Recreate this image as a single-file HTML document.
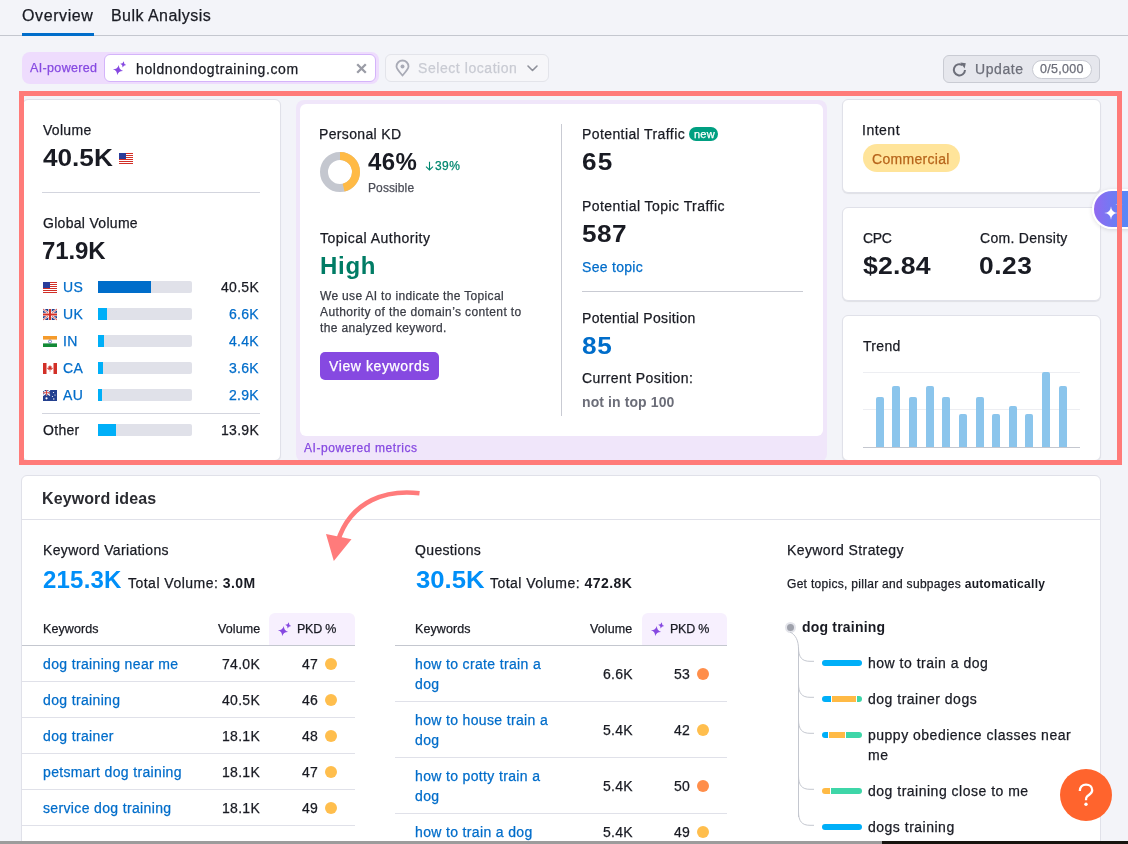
<!DOCTYPE html>
<html><head><meta charset="utf-8"><style>
html,body{margin:0;padding:0;width:1128px;height:844px;overflow:hidden;background:#F3F4F9;font-family:"Liberation Sans",sans-serif;}
.t{position:absolute;line-height:1;white-space:nowrap;will-change:transform;-webkit-text-stroke:0.25px currentColor;}
.t b{-webkit-text-stroke:0;}
.r{position:absolute;box-sizing:border-box;}
svg{position:absolute;overflow:visible;}
</style></head><body>
<div class="r" style="left:0.00px;top:35.00px;width:1128.00px;height:1.00px;background:#C4C7CF"></div>
<div class="t " style="left:22.30px;top:8.00px;font-size:16px;font-weight:400;color:#191B23;letter-spacing:0.6px;">Overview</div>
<div class="t " style="left:111.00px;top:8.00px;font-size:16px;font-weight:400;color:#191B23;letter-spacing:0.45px;">Bulk Analysis</div>
<div class="r" style="left:22.00px;top:33.00px;width:72.00px;height:3.00px;background:#006DCA"></div>
<div class="r" style="left:22.00px;top:52.00px;width:357.00px;height:32.00px;background:#EEDCFD;border-radius:8px"></div>
<div class="t " style="left:30.40px;top:62.00px;font-size:12.5px;font-weight:400;color:#8649E1;letter-spacing:0.35px;">AI-powered</div>
<div class="r" style="left:104.00px;top:54.00px;width:272.00px;height:28.00px;background:#fff;border:1px solid #D4B4FA;border-radius:6px"></div>
<svg style="left:118px;top:70px" width="1" height="1"><path fill="#8649E1" transform="rotate(10)" d="M0 -5.2 Q0.624 -0.624 5.2 0 Q0.624 0.624 0 5.2 Q-0.624 0.624 -5.2 0 Q-0.624 -0.624 0 -5.2 Z"/><path fill="#8649E1" transform="translate(5.2 -5.6) rotate(10)" d="M0 -3.1 Q0.372 -0.372 3.1 0 Q0.372 0.372 0 3.1 Q-0.372 0.372 -3.1 0 Q-0.372 -0.372 0 -3.1 Z"/></svg>
<div class="t " style="left:136.00px;top:62.00px;font-size:14px;font-weight:400;color:#191B23;letter-spacing:0.6px;">holdnondogtraining.com</div>
<svg style="left:355.5px;top:63px" width="11" height="11" viewBox="0 0 11 11"><path d="M1.2 1.2 L9.8 9.8 M9.8 1.2 L1.2 9.8" stroke="#9A9CA6" stroke-width="2.3" stroke-linecap="butt"/></svg>
<div class="r" style="left:385.00px;top:54.00px;width:164.00px;height:28.00px;background:#F6F6F9;border:1px solid #E3E4EA;border-radius:6px"></div>
<svg style="left:394.5px;top:60px" width="15" height="17" viewBox="0 0 15 17"><path d="M7.5 15.5 C4 11.5 1.5 8.8 1.5 6.5 A6 6 0 0 1 13.5 6.5 C13.5 8.8 11 11.5 7.5 15.5 Z" fill="none" stroke="#A9ABB6" stroke-width="1.8"/><circle cx="7.5" cy="6.6" r="2" fill="#A9ABB6"/></svg>
<div class="t " style="left:417.60px;top:61.00px;font-size:14px;font-weight:400;color:#C9CBD3;letter-spacing:0.56px;">Select location</div>
<svg style="left:526.5px;top:65px" width="11" height="7" viewBox="0 0 11 7"><path d="M1 1 L5.5 5.5 L10 1" fill="none" stroke="#8E909A" stroke-width="1.6" stroke-linecap="round" stroke-linejoin="round"/></svg>
<div class="r" style="left:943.00px;top:55.00px;width:157.00px;height:28.00px;background:#E6E7ED;border:1px solid #C9CBD3;border-radius:6px"></div>
<svg style="left:952px;top:61.5px" width="15" height="15" viewBox="0 0 15 15"><path d="M13 8 A5.6 5.6 0 1 1 10.6 3.2" fill="none" stroke="#6C6E79" stroke-width="2"/><path d="M8.4 0.6 L13.8 1.2 L12.6 6.4 Z" fill="#6C6E79"/></svg>
<div class="t " style="left:975.20px;top:62.00px;font-size:14px;font-weight:400;color:#6C6E79;letter-spacing:0.6px;">Update</div>
<div class="r" style="left:1032.00px;top:59.50px;width:59.50px;height:19.50px;background:#fff;border:1px solid #C9CBD3;border-radius:10px"></div>
<div class="t " style="left:1039.60px;top:63.00px;font-size:12.5px;font-weight:400;color:#6C6E79;letter-spacing:0.3px;">0/5,000</div>
<div class="r" style="left:22.00px;top:99.00px;width:259.00px;height:362.00px;background:#fff;border:1px solid #E0E1E9;border-radius:6px;box-shadow:0 1px 1px rgba(0,0,0,0.06)"></div>
<div class="t " style="left:42.60px;top:123.00px;font-size:14px;font-weight:400;color:#191B23;letter-spacing:0.3px;">Volume</div>
<div class="t " style="left:42.60px;top:146.00px;font-size:24px;font-weight:700;color:#191B23;letter-spacing:0px;-webkit-text-stroke:0;transform:scaleX(1.09);transform-origin:left top;">40.5K</div>
<svg style="left:119px;top:153px" width="14" height="11" viewBox="0 0 14 11"><rect width="14" height="11" fill="#fff"/><g fill="#D22F27"><rect y="0" width="14" height="1"/><rect y="2" width="14" height="1"/><rect y="4" width="14" height="1"/><rect y="6" width="14" height="1"/><rect y="8" width="14" height="1"/><rect y="10" width="14" height="1"/></g><rect width="7" height="6" fill="#2A3D9A"/></svg>
<div class="r" style="left:42.00px;top:192.00px;width:218.00px;height:1.00px;background:#D3D5DE"></div>
<div class="t " style="left:42.60px;top:216.00px;font-size:14px;font-weight:400;color:#191B23;letter-spacing:0.3px;">Global Volume</div>
<div class="t " style="left:41.80px;top:239.00px;font-size:24px;font-weight:700;color:#191B23;letter-spacing:-0.1px;-webkit-text-stroke:0;">71.9K</div>
<svg style="left:43px;top:282px" width="14" height="11" viewBox="0 0 14 11"><rect width="14" height="11" fill="#fff"/><g fill="#D22F27"><rect y="0" width="14" height="1"/><rect y="2" width="14" height="1"/><rect y="4" width="14" height="1"/><rect y="6" width="14" height="1"/><rect y="8" width="14" height="1"/><rect y="10" width="14" height="1"/></g><rect width="7" height="6" fill="#2A3D9A"/></svg>
<div class="t " style="left:63.20px;top:280.00px;font-size:14px;font-weight:400;color:#006DCA;letter-spacing:0.3px;">US</div>
<div class="r" style="left:98.00px;top:281.00px;width:94.00px;height:12.00px;background:#E0E1E9;border-radius:0 2px 2px 0"></div>
<div class="r" style="left:98.00px;top:281.00px;width:52.80px;height:12.00px;background:#006DCA"></div>
<div class="t " style="right:869.30px;top:280.00px;font-size:14px;font-weight:400;color:#191B23;letter-spacing:0.3px;">40.5K</div>
<svg style="left:43px;top:309px" width="14" height="11" viewBox="0 0 14 11"><rect width="14" height="11" fill="#23408F"/><path d="M0 0 L14 11 M14 0 L0 11" stroke="#fff" stroke-width="2.2"/><path d="M0 0 L14 11 M14 0 L0 11" stroke="#D22F27" stroke-width="0.8"/><rect x="5.3" width="3.4" height="11" fill="#fff"/><rect y="3.8" width="14" height="3.4" fill="#fff"/><rect x="6" width="2" height="11" fill="#D22F27"/><rect y="4.5" width="14" height="2" fill="#D22F27"/></svg>
<div class="t " style="left:63.20px;top:307.00px;font-size:14px;font-weight:400;color:#006DCA;letter-spacing:0.3px;">UK</div>
<div class="r" style="left:98.00px;top:308.00px;width:94.00px;height:12.00px;background:#E0E1E9;border-radius:0 2px 2px 0"></div>
<div class="r" style="left:98.00px;top:308.00px;width:8.90px;height:12.00px;background:#00AFF8"></div>
<div class="t " style="right:869.30px;top:307.00px;font-size:14px;font-weight:400;color:#006DCA;letter-spacing:0.3px;">6.6K</div>
<svg style="left:43px;top:336px" width="14" height="11" viewBox="0 0 14 11"><rect width="14" height="11" fill="#fff"/><rect width="14" height="3.6" fill="#F59B2B"/><rect y="7.4" width="14" height="3.6" fill="#138A36"/><circle cx="7" cy="5.5" r="1.5" fill="none" stroke="#2A3D9A" stroke-width="0.6"/></svg>
<div class="t " style="left:63.20px;top:334.00px;font-size:14px;font-weight:400;color:#006DCA;letter-spacing:0.3px;">IN</div>
<div class="r" style="left:98.00px;top:335.00px;width:94.00px;height:12.00px;background:#E0E1E9;border-radius:0 2px 2px 0"></div>
<div class="r" style="left:98.00px;top:335.00px;width:5.70px;height:12.00px;background:#00AFF8"></div>
<div class="t " style="right:869.30px;top:334.00px;font-size:14px;font-weight:400;color:#006DCA;letter-spacing:0.3px;">4.4K</div>
<svg style="left:43px;top:363px" width="14" height="11" viewBox="0 0 14 11"><rect width="14" height="11" fill="#fff"/><rect width="3.5" height="11" fill="#D22F27"/><rect x="10.5" width="3.5" height="11" fill="#D22F27"/><path d="M7 2 L7.8 3.6 L8.8 3.2 L8.4 5.4 L9.8 4.6 L9.6 5.8 L8.6 6.8 L7.3 6.6 L7.3 8.8 L6.7 8.8 L6.7 6.6 L5.4 6.8 L4.4 5.8 L4.2 4.6 L5.6 5.4 L5.2 3.2 L6.2 3.6 Z" fill="#D22F27"/></svg>
<div class="t " style="left:63.20px;top:361.00px;font-size:14px;font-weight:400;color:#006DCA;letter-spacing:0.3px;">CA</div>
<div class="r" style="left:98.00px;top:362.00px;width:94.00px;height:12.00px;background:#E0E1E9;border-radius:0 2px 2px 0"></div>
<div class="r" style="left:98.00px;top:362.00px;width:5.00px;height:12.00px;background:#00AFF8"></div>
<div class="t " style="right:869.30px;top:361.00px;font-size:14px;font-weight:400;color:#006DCA;letter-spacing:0.3px;">3.6K</div>
<svg style="left:43px;top:390px" width="14" height="11" viewBox="0 0 14 11"><rect width="14" height="11" fill="#23408F"/><path d="M0 0 L7 5.5 M7 0 L0 5.5" stroke="#fff" stroke-width="1.2"/><rect x="3" width="1.2" height="5.5" fill="#fff"/><rect y="2.2" width="7" height="1.2" fill="#fff"/><rect x="3.2" width="0.8" height="5.5" fill="#D22F27"/><rect y="2.4" width="7" height="0.8" fill="#D22F27"/><circle cx="3.5" cy="8.3" r="1.1" fill="#fff"/><circle cx="10.5" cy="2.5" r="0.6" fill="#fff"/><circle cx="12" cy="5" r="0.6" fill="#fff"/><circle cx="9.5" cy="6.5" r="0.6" fill="#fff"/><circle cx="10.8" cy="9" r="0.7" fill="#fff"/></svg>
<div class="t " style="left:63.20px;top:388.00px;font-size:14px;font-weight:400;color:#006DCA;letter-spacing:0.3px;">AU</div>
<div class="r" style="left:98.00px;top:389.00px;width:94.00px;height:12.00px;background:#E0E1E9;border-radius:0 2px 2px 0"></div>
<div class="r" style="left:98.00px;top:389.00px;width:3.90px;height:12.00px;background:#00AFF8"></div>
<div class="t " style="right:869.30px;top:388.00px;font-size:14px;font-weight:400;color:#006DCA;letter-spacing:0.3px;">2.9K</div>
<div class="r" style="left:42.00px;top:412.60px;width:218.00px;height:1.00px;background:#D3D5DE"></div>
<div class="t " style="left:42.60px;top:423.00px;font-size:14px;font-weight:400;color:#191B23;letter-spacing:0.3px;">Other</div>
<div class="r" style="left:98.00px;top:424.00px;width:94.00px;height:12.00px;background:#E0E1E9;border-radius:0 2px 2px 0"></div>
<div class="r" style="left:98.00px;top:424.00px;width:18.00px;height:12.00px;background:#00AFF8"></div>
<div class="t " style="right:869.30px;top:423.00px;font-size:14px;font-weight:400;color:#191B23;letter-spacing:0.3px;">13.9K</div>
<div class="r" style="left:296.00px;top:100.00px;width:531.00px;height:362.00px;background:#F0E6FA;border-radius:8px"></div>
<div class="r" style="left:300.00px;top:104.00px;width:523.00px;height:332.00px;background:#fff;border-radius:6px"></div>
<div class="t " style="left:319.00px;top:127.00px;font-size:14px;font-weight:400;color:#191B23;letter-spacing:0.35px;">Personal KD</div>
<svg style="left:320px;top:152px" width="40" height="40" viewBox="0 0 40 40"><circle cx="20" cy="20" r="16" fill="none" stroke="#C4C7CF" stroke-width="8"/><circle cx="20" cy="20" r="16" fill="none" stroke="#FFBA45" stroke-width="8" stroke-dasharray="46.24 100.53" transform="rotate(-90 20 20)"/></svg>
<div class="t " style="left:368.20px;top:150.00px;font-size:24px;font-weight:700;color:#191B23;letter-spacing:0.4px;-webkit-text-stroke:0;">46%</div>
<svg style="left:425px;top:160.5px" width="9" height="10" viewBox="0 0 9 10"><path d="M4.5 0.8 L4.5 9 M1 5.6 L4.5 9 L8 5.6" fill="none" stroke="#00876F" stroke-width="1.1"/></svg>
<div class="t " style="left:435.00px;top:160.00px;font-size:12px;font-weight:400;color:#00876F;letter-spacing:0.4px;">39%</div>
<div class="t " style="left:368.20px;top:182.00px;font-size:12px;font-weight:400;color:#4B4D57;letter-spacing:0.1px;">Possible</div>
<div class="t " style="left:320.30px;top:231.00px;font-size:14px;font-weight:400;color:#191B23;letter-spacing:0.5px;">Topical Authority</div>
<div class="t " style="left:319.60px;top:254.00px;font-size:24px;font-weight:700;color:#007C65;letter-spacing:0.7px;-webkit-text-stroke:0;">High</div>
<div class="t " style="left:320.30px;top:290.00px;font-size:12px;font-weight:400;color:#3A3C45;letter-spacing:0.33px;">We use AI to indicate the Topical</div>
<div class="t " style="left:320.30px;top:306.00px;font-size:12px;font-weight:400;color:#3A3C45;letter-spacing:0.38px;">Authority of the domain’s content to</div>
<div class="t " style="left:320.30px;top:322.00px;font-size:12px;font-weight:400;color:#3A3C45;letter-spacing:0.35px;">the analyzed keyword.</div>
<div class="r" style="left:320.20px;top:352.10px;width:118.50px;height:27.70px;background:#8649E1;border-radius:5px"></div>
<div class="t " style="left:329.30px;top:359.00px;font-size:14px;font-weight:400;color:#fff;letter-spacing:0.6px;">View keywords</div>
<div class="r" style="left:561.00px;top:124.30px;width:1.00px;height:291.50px;background:#C9CBD3"></div>
<div class="t " style="left:582.20px;top:127.00px;font-size:14px;font-weight:400;color:#191B23;letter-spacing:0.4px;">Potential Traffic</div>
<div class="r" style="left:689.00px;top:127.30px;width:29.00px;height:13.60px;background:#009F81;border-radius:7px"></div>
<div class="t " style="left:693.50px;top:129.00px;font-size:11px;font-weight:400;color:#fff;letter-spacing:0.2px;">new</div>
<div class="t " style="left:582.20px;top:150.00px;font-size:24px;font-weight:700;color:#191B23;letter-spacing:1.2px;-webkit-text-stroke:0;transform:scaleX(1.09);transform-origin:left top;">65</div>
<div class="t " style="left:582.20px;top:199.00px;font-size:14px;font-weight:400;color:#191B23;letter-spacing:0.45px;">Potential Topic Traffic</div>
<div class="t " style="left:582.20px;top:222.00px;font-size:24px;font-weight:700;color:#191B23;letter-spacing:0.4px;-webkit-text-stroke:0;transform:scaleX(1.09);transform-origin:left top;">587</div>
<div class="t " style="left:582.10px;top:260.00px;font-size:14px;font-weight:400;color:#006DCA;letter-spacing:0.3px;">See topic</div>
<div class="r" style="left:582.00px;top:291.00px;width:221.00px;height:1.00px;background:#C9CBD3"></div>
<div class="t " style="left:582.20px;top:311.00px;font-size:14px;font-weight:400;color:#191B23;letter-spacing:0.3px;">Potential Position</div>
<div class="t " style="left:581.50px;top:334.00px;font-size:24px;font-weight:700;color:#006DCA;letter-spacing:0.6px;-webkit-text-stroke:0;transform:scaleX(1.09);transform-origin:left top;">85</div>
<div class="t " style="left:582.20px;top:371.00px;font-size:14px;font-weight:400;color:#191B23;letter-spacing:0.41px;">Current Position:</div>
<div class="t " style="left:582.20px;top:395.00px;font-size:14px;font-weight:700;color:#6C6E79;letter-spacing:0.1px;-webkit-text-stroke:0;">not in top 100</div>
<div class="t " style="left:304.00px;top:442.00px;font-size:12px;font-weight:400;color:#8649E1;letter-spacing:0.57px;">AI-powered metrics</div>
<div class="r" style="left:842.00px;top:99.00px;width:259.00px;height:94.00px;background:#fff;border:1px solid #E0E1E9;border-radius:6px;box-shadow:0 1px 1px rgba(0,0,0,0.08)"></div>
<div class="r" style="left:842.00px;top:207.00px;width:259.00px;height:94.00px;background:#fff;border:1px solid #E0E1E9;border-radius:6px;box-shadow:0 1px 1px rgba(0,0,0,0.08)"></div>
<div class="r" style="left:842.00px;top:315.00px;width:259.00px;height:146.00px;background:#fff;border:1px solid #E0E1E9;border-radius:6px;box-shadow:0 1px 1px rgba(0,0,0,0.08)"></div>
<div class="t " style="left:862.00px;top:123.00px;font-size:14px;font-weight:400;color:#191B23;letter-spacing:0.5px;">Intent</div>
<div class="r" style="left:863.00px;top:144.00px;width:97.00px;height:28.00px;background:#FFE49A;border-radius:14px"></div>
<div class="t " style="left:872.30px;top:152.00px;font-size:14px;font-weight:400;color:#B7651B;letter-spacing:0.3px;">Commercial</div>
<div class="t " style="left:863.20px;top:231.00px;font-size:14px;font-weight:400;color:#191B23;letter-spacing:-0.4px;">CPC</div>
<div class="t " style="left:979.80px;top:231.00px;font-size:14px;font-weight:400;color:#191B23;letter-spacing:0.3px;">Com. Density</div>
<div class="t " style="left:863.20px;top:254.00px;font-size:24px;font-weight:700;color:#191B23;letter-spacing:0.2px;-webkit-text-stroke:0;transform:scaleX(1.11);transform-origin:left top;">$2.84</div>
<div class="t " style="left:978.80px;top:254.00px;font-size:24px;font-weight:700;color:#191B23;letter-spacing:0.5px;-webkit-text-stroke:0;transform:scaleX(1.1);transform-origin:left top;">0.23</div>
<div class="t " style="left:863.00px;top:339.00px;font-size:14px;font-weight:400;color:#191B23;letter-spacing:0.3px;">Trend</div>
<div class="r" style="left:863.00px;top:372.20px;width:217.00px;height:1.00px;background:#EDEEF2"></div>
<div class="r" style="left:863.00px;top:409.40px;width:217.00px;height:1.00px;background:#EDEEF2"></div>
<div class="r" style="left:863.00px;top:446.60px;width:217.00px;height:1.00px;background:#C4C7CF"></div>
<div class="r" style="left:875.90px;top:397.00px;width:7.80px;height:49.80px;background:#8BC5EC;border-radius:2px 2px 0 0"></div>
<div class="r" style="left:892.20px;top:386.00px;width:7.80px;height:60.80px;background:#8BC5EC;border-radius:2px 2px 0 0"></div>
<div class="r" style="left:908.80px;top:397.00px;width:7.80px;height:49.80px;background:#8BC5EC;border-radius:2px 2px 0 0"></div>
<div class="r" style="left:925.90px;top:386.00px;width:7.80px;height:60.80px;background:#8BC5EC;border-radius:2px 2px 0 0"></div>
<div class="r" style="left:941.80px;top:397.00px;width:7.80px;height:49.80px;background:#8BC5EC;border-radius:2px 2px 0 0"></div>
<div class="r" style="left:958.80px;top:414.00px;width:7.80px;height:32.80px;background:#8BC5EC;border-radius:2px 2px 0 0"></div>
<div class="r" style="left:975.90px;top:397.00px;width:7.80px;height:49.80px;background:#8BC5EC;border-radius:2px 2px 0 0"></div>
<div class="r" style="left:991.80px;top:414.00px;width:7.80px;height:32.80px;background:#8BC5EC;border-radius:2px 2px 0 0"></div>
<div class="r" style="left:1008.80px;top:406.00px;width:7.80px;height:40.80px;background:#8BC5EC;border-radius:2px 2px 0 0"></div>
<div class="r" style="left:1025.20px;top:414.00px;width:7.80px;height:32.80px;background:#8BC5EC;border-radius:2px 2px 0 0"></div>
<div class="r" style="left:1042.20px;top:372.00px;width:7.80px;height:74.80px;background:#8BC5EC;border-radius:2px 2px 0 0"></div>
<div class="r" style="left:1059.30px;top:386.00px;width:7.80px;height:60.80px;background:#8BC5EC;border-radius:2px 2px 0 0"></div>
<div class="r" style="left:1092.3px;top:189px;width:60px;height:40px;border-radius:20px 0 0 20px;background:linear-gradient(90deg,#9169F0 0%,#5A86F6 55%,#3F94F8 100%);border:2px solid #fff;border-right:none;box-shadow:0 1px 4px rgba(0,0,0,0.12)"></div>
<svg style="left:1111.4px;top:212.5px" width="1" height="1"><path fill="#fff" d="M0 -6.8 Q0.408 -0.408 6.8 0 Q0.408 0.408 0 6.8 Q-0.408 0.408 -6.8 0 Q-0.408 -0.408 0 -6.8 Z"/><path fill="#fff" d="M8 -12.1 Q8.216 -8.716 11.6 -8.5 Q8.216 -8.284 8 -4.9 Q7.784 -8.284 4.4 -8.5 Q7.784 -8.716 8 -12.1 Z"/></svg>
<div class="r" style="left:18.50px;top:90.50px;width:1103.00px;height:374.00px;border:5px solid #FF7B79"></div>
<div class="r" style="left:21.00px;top:475.00px;width:1080.00px;height:400.00px;background:#fff;border:1px solid #E0E1E9;border-radius:6px"></div>
<div class="t " style="left:41.50px;top:491.00px;font-size:16px;font-weight:700;color:#2A2B31;letter-spacing:0.1px;-webkit-text-stroke:0;">Keyword ideas</div>
<div class="r" style="left:22.00px;top:519.00px;width:1078.00px;height:1.00px;background:#E0E1E9"></div>
<div class="t " style="left:42.60px;top:543.00px;font-size:14px;font-weight:400;color:#191B23;letter-spacing:0.35px;">Keyword Variations</div>
<div class="t " style="left:43.00px;top:568.00px;font-size:24px;font-weight:700;color:#008FF8;letter-spacing:0.2px;-webkit-text-stroke:0;">215.3K</div>
<div class="t " style="left:128.10px;top:576.00px;font-size:14px;font-weight:400;color:#191B23;letter-spacing:0.48px;">Total Volume: <b>3.0M</b></div>
<div class="t " style="left:42.70px;top:623.00px;font-size:12.5px;font-weight:400;color:#191B23;letter-spacing:0.1px;">Keywords</div>
<div class="t " style="right:867.70px;top:623.00px;font-size:12.5px;font-weight:400;color:#191B23;letter-spacing:0.1px;">Volume</div>
<div class="r" style="left:269.00px;top:613.20px;width:85.70px;height:32.00px;background:#F7F0FE;border-radius:6px 6px 0 0"></div>
<svg style="left:282.8px;top:630.5px" width="1" height="1"><path fill="#8649E1" transform="rotate(10)" d="M0 -5.2 Q0.624 -0.624 5.2 0 Q0.624 0.624 0 5.2 Q-0.624 0.624 -5.2 0 Q-0.624 -0.624 0 -5.2 Z"/><path fill="#8649E1" transform="translate(5.2 -5.6) rotate(10)" d="M0 -3.1 Q0.372 -0.372 3.1 0 Q0.372 0.372 0 3.1 Q-0.372 0.372 -3.1 0 Q-0.372 -0.372 0 -3.1 Z"/></svg>
<div class="t " style="left:296.80px;top:623.00px;font-size:12.5px;font-weight:400;color:#191B23;letter-spacing:-0.25px;">PKD %</div>
<div class="r" style="left:22.00px;top:644.60px;width:332.70px;height:1.20px;background:#C4C7CF"></div>
<div class="t " style="left:42.70px;top:657.00px;font-size:14px;font-weight:400;color:#006DCA;letter-spacing:0.35px;">dog training near me</div>
<div class="t " style="right:867.70px;top:657.00px;font-size:14px;font-weight:400;color:#191B23;letter-spacing:0.3px;">74.0K</div>
<div class="t " style="right:810.30px;top:657.00px;font-size:14px;font-weight:400;color:#191B23;letter-spacing:0.3px;">47</div>
<div class="r" style="left:324.80px;top:657.50px;width:12.00px;height:12.00px;background:#FFBE4D;border-radius:50%"></div>
<div class="r" style="left:22.00px;top:681.00px;width:332.70px;height:1.00px;background:#E0E1E9"></div>
<div class="t " style="left:42.70px;top:693.00px;font-size:14px;font-weight:400;color:#006DCA;letter-spacing:0.35px;">dog training</div>
<div class="t " style="right:867.70px;top:693.00px;font-size:14px;font-weight:400;color:#191B23;letter-spacing:0.3px;">40.5K</div>
<div class="t " style="right:810.30px;top:693.00px;font-size:14px;font-weight:400;color:#191B23;letter-spacing:0.3px;">46</div>
<div class="r" style="left:324.80px;top:693.50px;width:12.00px;height:12.00px;background:#FFBE4D;border-radius:50%"></div>
<div class="r" style="left:22.00px;top:717.00px;width:332.70px;height:1.00px;background:#E0E1E9"></div>
<div class="t " style="left:42.70px;top:729.00px;font-size:14px;font-weight:400;color:#006DCA;letter-spacing:0.35px;">dog trainer</div>
<div class="t " style="right:867.70px;top:729.00px;font-size:14px;font-weight:400;color:#191B23;letter-spacing:0.3px;">18.1K</div>
<div class="t " style="right:810.30px;top:729.00px;font-size:14px;font-weight:400;color:#191B23;letter-spacing:0.3px;">48</div>
<div class="r" style="left:324.80px;top:729.50px;width:12.00px;height:12.00px;background:#FFBE4D;border-radius:50%"></div>
<div class="r" style="left:22.00px;top:753.00px;width:332.70px;height:1.00px;background:#E0E1E9"></div>
<div class="t " style="left:42.70px;top:765.00px;font-size:14px;font-weight:400;color:#006DCA;letter-spacing:0.35px;">petsmart dog training</div>
<div class="t " style="right:867.70px;top:765.00px;font-size:14px;font-weight:400;color:#191B23;letter-spacing:0.3px;">18.1K</div>
<div class="t " style="right:810.30px;top:765.00px;font-size:14px;font-weight:400;color:#191B23;letter-spacing:0.3px;">47</div>
<div class="r" style="left:324.80px;top:765.50px;width:12.00px;height:12.00px;background:#FFBE4D;border-radius:50%"></div>
<div class="r" style="left:22.00px;top:789.00px;width:332.70px;height:1.00px;background:#E0E1E9"></div>
<div class="t " style="left:42.70px;top:801.00px;font-size:14px;font-weight:400;color:#006DCA;letter-spacing:0.35px;">service dog training</div>
<div class="t " style="right:867.70px;top:801.00px;font-size:14px;font-weight:400;color:#191B23;letter-spacing:0.3px;">18.1K</div>
<div class="t " style="right:810.30px;top:801.00px;font-size:14px;font-weight:400;color:#191B23;letter-spacing:0.3px;">49</div>
<div class="r" style="left:324.80px;top:801.50px;width:12.00px;height:12.00px;background:#FFBE4D;border-radius:50%"></div>
<div class="r" style="left:22.00px;top:825.00px;width:332.70px;height:1.00px;background:#E0E1E9"></div>
<div class="t " style="left:415.40px;top:543.00px;font-size:14px;font-weight:400;color:#191B23;letter-spacing:0.35px;">Questions</div>
<div class="t " style="left:415.80px;top:568.00px;font-size:24px;font-weight:700;color:#008FF8;letter-spacing:0px;-webkit-text-stroke:0;transform:scaleX(1.07);transform-origin:left top;">30.5K</div>
<div class="t " style="left:490.30px;top:576.00px;font-size:14px;font-weight:400;color:#191B23;letter-spacing:0.46px;">Total Volume: <b>472.8K</b></div>
<div class="t " style="left:415.40px;top:623.00px;font-size:12.5px;font-weight:400;color:#191B23;letter-spacing:0.1px;">Keywords</div>
<div class="t " style="right:495.30px;top:623.00px;font-size:12.5px;font-weight:400;color:#191B23;letter-spacing:0.1px;">Volume</div>
<div class="r" style="left:642.00px;top:613.20px;width:85.00px;height:32.00px;background:#F7F0FE;border-radius:6px 6px 0 0"></div>
<svg style="left:655.8px;top:630.5px" width="1" height="1"><path fill="#8649E1" transform="rotate(10)" d="M0 -5.2 Q0.624 -0.624 5.2 0 Q0.624 0.624 0 5.2 Q-0.624 0.624 -5.2 0 Q-0.624 -0.624 0 -5.2 Z"/><path fill="#8649E1" transform="translate(5.2 -5.6) rotate(10)" d="M0 -3.1 Q0.372 -0.372 3.1 0 Q0.372 0.372 0 3.1 Q-0.372 0.372 -3.1 0 Q-0.372 -0.372 0 -3.1 Z"/></svg>
<div class="t " style="left:669.80px;top:623.00px;font-size:12.5px;font-weight:400;color:#191B23;letter-spacing:-0.25px;">PKD %</div>
<div class="r" style="left:395.00px;top:644.60px;width:332.00px;height:1.20px;background:#C4C7CF"></div>
<div class="t " style="left:415.40px;top:657.00px;font-size:14px;font-weight:400;color:#006DCA;letter-spacing:0.35px;">how to crate train a</div>
<div class="t " style="left:415.40px;top:677.00px;font-size:14px;font-weight:400;color:#006DCA;letter-spacing:0.35px;">dog</div>
<div class="t " style="right:495.30px;top:667.00px;font-size:14px;font-weight:400;color:#191B23;letter-spacing:0.3px;">6.6K</div>
<div class="t " style="right:437.40px;top:667.00px;font-size:14px;font-weight:400;color:#191B23;letter-spacing:0.3px;">53</div>
<div class="r" style="left:696.70px;top:667.50px;width:12.00px;height:12.00px;background:#FF8E4A;border-radius:50%"></div>
<div class="r" style="left:395.00px;top:701.00px;width:332.00px;height:1.00px;background:#E0E1E9"></div>
<div class="t " style="left:415.40px;top:713.00px;font-size:14px;font-weight:400;color:#006DCA;letter-spacing:0.35px;">how to house train a</div>
<div class="t " style="left:415.40px;top:733.00px;font-size:14px;font-weight:400;color:#006DCA;letter-spacing:0.35px;">dog</div>
<div class="t " style="right:495.30px;top:723.00px;font-size:14px;font-weight:400;color:#191B23;letter-spacing:0.3px;">5.4K</div>
<div class="t " style="right:437.40px;top:723.00px;font-size:14px;font-weight:400;color:#191B23;letter-spacing:0.3px;">42</div>
<div class="r" style="left:696.70px;top:723.50px;width:12.00px;height:12.00px;background:#FFBE4D;border-radius:50%"></div>
<div class="r" style="left:395.00px;top:757.00px;width:332.00px;height:1.00px;background:#E0E1E9"></div>
<div class="t " style="left:415.40px;top:769.00px;font-size:14px;font-weight:400;color:#006DCA;letter-spacing:0.35px;">how to potty train a</div>
<div class="t " style="left:415.40px;top:789.00px;font-size:14px;font-weight:400;color:#006DCA;letter-spacing:0.35px;">dog</div>
<div class="t " style="right:495.30px;top:779.00px;font-size:14px;font-weight:400;color:#191B23;letter-spacing:0.3px;">5.4K</div>
<div class="t " style="right:437.40px;top:779.00px;font-size:14px;font-weight:400;color:#191B23;letter-spacing:0.3px;">50</div>
<div class="r" style="left:696.70px;top:779.50px;width:12.00px;height:12.00px;background:#FF8E4A;border-radius:50%"></div>
<div class="r" style="left:395.00px;top:813.00px;width:332.00px;height:1.00px;background:#E0E1E9"></div>
<div class="t " style="left:415.40px;top:825.00px;font-size:14px;font-weight:400;color:#006DCA;letter-spacing:0.35px;">how to train a dog</div>
<div class="t " style="right:495.30px;top:825.00px;font-size:14px;font-weight:400;color:#191B23;letter-spacing:0.3px;">5.4K</div>
<div class="t " style="right:437.40px;top:825.00px;font-size:14px;font-weight:400;color:#191B23;letter-spacing:0.3px;">49</div>
<div class="r" style="left:696.70px;top:825.50px;width:12.00px;height:12.00px;background:#FFBE4D;border-radius:50%"></div>
<div class="r" style="left:395.00px;top:849.00px;width:332.00px;height:1.00px;background:#E0E1E9"></div>
<div class="t " style="left:787.40px;top:543.00px;font-size:14px;font-weight:400;color:#191B23;letter-spacing:0.4px;">Keyword Strategy</div>
<div class="t " style="left:787.40px;top:578.00px;font-size:12px;font-weight:400;color:#191B23;letter-spacing:0.3px;">Get topics, pillar and subpages <b>automatically</b></div>
<div class="r" style="left:784.5px;top:621.8px;width:11px;height:11px;border-radius:50%;background:#9EA1AB;border:2px solid #E3E4EA"></div>
<div class="t " style="left:801.80px;top:620.00px;font-size:14px;font-weight:700;color:#191B23;letter-spacing:0.2px;-webkit-text-stroke:0;">dog training</div>
<svg style="left:780px;top:625px" width="60" height="210" viewBox="0 0 60 210"><g fill="none" stroke="#C4C7CF" stroke-width="1"><path d="M10 7 C16 10 18.5 16 18.5 24 L18.5 192"/><path d="M18.5 22.5 C18.5 32.5 22 36.3 30 36.3 L34 36.3"/><path d="M18.5 58.5 C18.5 68.5 22 72.3 30 72.3 L34 72.3"/><path d="M18.5 94.5 C18.5 104.5 22 108.3 30 108.3 L34 108.3"/><path d="M18.5 150.5 C18.5 160.5 22 164.3 30 164.3 L34 164.3"/><path d="M18.5 186.5 C18.5 196.5 22 200.3 30 200.3 L34 200.3"/></g></svg>
<div class="r" style="left:822.20px;top:660.00px;width:40.00px;height:6.00px;background:#00AFF8;border-radius:3px"></div>
<div class="t " style="left:868.20px;top:656.00px;font-size:14px;font-weight:400;color:#191B23;letter-spacing:0.5px;">how to train a dog</div>
<div class="r" style="left:822.20px;top:696.00px;width:9.00px;height:6.00px;background:#00AFF8;border-radius:3px 0 0 3px"></div>
<div class="r" style="left:832.20px;top:696.00px;width:24.00px;height:6.00px;background:#FFBA45;border-radius:0"></div>
<div class="r" style="left:857.20px;top:696.00px;width:5.00px;height:6.00px;background:#3ED6A8;border-radius:0 3px 3px 0"></div>
<div class="t " style="left:868.20px;top:692.00px;font-size:14px;font-weight:400;color:#191B23;letter-spacing:0.5px;">dog trainer dogs</div>
<div class="r" style="left:822.20px;top:732.00px;width:6.00px;height:6.00px;background:#00AFF8;border-radius:3px 0 0 3px"></div>
<div class="r" style="left:829.20px;top:732.00px;width:16.00px;height:6.00px;background:#FFBA45;border-radius:0"></div>
<div class="r" style="left:846.20px;top:732.00px;width:16.00px;height:6.00px;background:#3ED6A8;border-radius:0 3px 3px 0"></div>
<div class="t " style="left:868.20px;top:728.00px;font-size:14px;font-weight:400;color:#191B23;letter-spacing:0.5px;">puppy obedience classes near</div>
<div class="r" style="left:822.20px;top:788.00px;width:8.00px;height:6.00px;background:#FFBA45;border-radius:3px 0 0 3px"></div>
<div class="r" style="left:831.20px;top:788.00px;width:31.00px;height:6.00px;background:#3ED6A8;border-radius:0 3px 3px 0"></div>
<div class="t " style="left:868.20px;top:784.00px;font-size:14px;font-weight:400;color:#191B23;letter-spacing:0.5px;">dog training close to me</div>
<div class="r" style="left:822.20px;top:824.00px;width:40.00px;height:6.00px;background:#00AFF8;border-radius:3px"></div>
<div class="t " style="left:868.20px;top:820.00px;font-size:14px;font-weight:400;color:#191B23;letter-spacing:0.5px;">dogs training</div>
<div class="t " style="left:868.20px;top:748.00px;font-size:14px;font-weight:400;color:#191B23;letter-spacing:0.5px;">me</div>
<svg style="left:0;top:0" width="1128" height="844"><path d="M419.5 493.2 C388 489.5 351 499 337.5 542" fill="none" stroke="#FF7B7B" stroke-width="4.6"/><path d="M326 534 L351.5 539.2 L333.8 561 Z" fill="#FF7B7B"/></svg>
<div class="r" style="left:1060px;top:768.8px;width:52px;height:52px;border-radius:50%;background:#FF642D"></div>
<svg style="left:1074px;top:780px" width="24" height="30" viewBox="0 0 24 30"><path d="M5.8 11 C5.8 7 8.4 4.6 12 4.6 C15.6 4.6 18.2 7 18.2 10.2 C18.2 13.6 14.9 14.6 13 16.6 C12.2 17.5 12 18.4 12 20.2" fill="none" stroke="#fff" stroke-width="2.3"/><circle cx="12" cy="24.2" r="1.7" fill="#fff"/></svg>
<div class="r" style="left:0.00px;top:841.00px;width:882.00px;height:3.00px;background:#9C9C9C"></div>
<div class="r" style="left:882.00px;top:841.00px;width:246.00px;height:3.00px;background:#17140F"></div>
</body></html>
